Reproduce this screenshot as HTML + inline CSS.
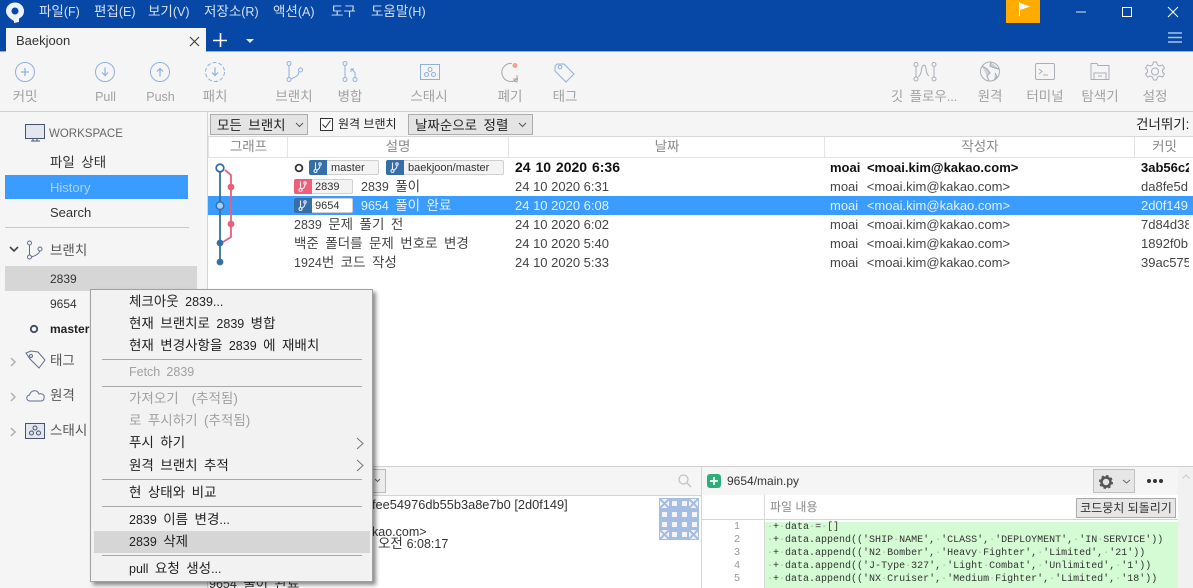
<!DOCTYPE html>
<html><head><meta charset="utf-8">
<style>
html,body{margin:0;padding:0;width:1193px;height:588px;overflow:hidden;background:#fff}
body{position:relative;font-family:"Liberation Sans","Noto Sans CJK KR",sans-serif;font-size:13px;color:#333}
i{font-style:normal;font-size:12.5px}
.a{position:absolute;white-space:nowrap}
.k{font-size:13.5px;word-spacing:2.7px}
.m{color:#d5e1f3;top:4px;font-size:13.5px;line-height:16px}
.t{color:#a2a2a2;font-size:13.5px;top:89px;line-height:16px;text-align:center;transform:translateX(-50%);word-spacing:2.7px}
svg{position:absolute;overflow:visible}
.r{position:absolute;left:208px;right:0;height:19px;line-height:19px;font-size:13px}
.de{position:absolute;font-size:13.5px;word-spacing:2.7px}
.d{position:absolute;left:307px;font-size:13px}
.w{position:absolute;left:622px;font-size:13px;word-spacing:5px}
.h{position:absolute;left:933px;width:48px;overflow:hidden;font-size:13px}
.c{position:absolute;top:137px;height:20px;line-height:20px;color:#8a8a8a;font-size:13.5px;text-align:center;border-left:1px solid #e4e4e4}
.btn{position:absolute;top:114px;height:19px;background:#e4e4e4;border:1px solid #adadad;line-height:21px;font-size:13.5px;word-spacing:2.7px;color:#222;padding-left:6px;box-sizing:content-box}
.tag{position:absolute;height:13px;border:1px solid #d0d0d0;background:#f3f3f3;border-radius:2px;font-size:11px;line-height:15px;color:#333;box-sizing:content-box}
.tg{position:absolute;left:-1px;top:-1px;width:18px;height:15px;border-radius:2px 0 0 2px}
.mi{position:absolute;left:129px;font-size:13.5px;word-spacing:2.7px;line-height:16px;color:#222;white-space:nowrap}
.g{color:#a0a0a0}
.sep{position:absolute;left:102px;width:260px;height:1px;background:#a8a8a8}
.s{position:absolute;left:50px;font-size:13.5px;word-spacing:2.7px;line-height:16px;white-space:nowrap}
.ln{position:absolute;left:702px;width:38px;text-align:right;font:10.5px/13px "Liberation Sans",sans-serif;color:#999}
.code{position:absolute;left:767px;font:10px/13px "Liberation Mono",monospace;color:#333;white-space:pre}
.code b{font-weight:400;color:#9cc59c}
</style></head><body>
<!-- title -->
<div class="a" style="left:0;top:0;width:1193px;height:51px;background:#0747a6"></div>
<div class="a" style="left:0;top:51px;width:1193px;height:1px;background:#8fb0d9"></div>
<svg width="24" height="26" style="left:4px;top:1px" viewBox="0 0 24 26"><path d="M10 20C5 17 2 14 2 10a9 8.500 0 1 1 18 0c0 4-2 6-5 7.500V21l-5 1z" fill="#eef3fb"/><circle cx="11" cy="10" r="3.500" fill="#0747a6"/></svg>
<div class="a m" style="left:39px">파일<i>(F)</i></div>
<div class="a m" style="left:94px">편집<i>(E)</i></div>
<div class="a m" style="left:148px">보기<i>(V)</i></div>
<div class="a m" style="left:204px">저장소<i>(R)</i></div>
<div class="a m" style="left:273px">액션<i>(A)</i></div>
<div class="a m" style="left:331px">도구</div>
<div class="a m" style="left:371px">도움말<i>(H)</i></div>
<div class="a" style="left:1006px;top:0;width:34px;height:23px;background:#ffab00"></div>
<svg width="14" height="16" style="left:1018px;top:2px"><path d="M1.500 0v14" stroke="#fff" fill="none"/><path d="M2 1l10 3.500L2 8z" fill="#fff"/></svg>
<svg width="120" height="14" style="left:1070px;top:5px"><path d="M6 7h10" stroke="#dfe8f5" fill="none"/><rect x="52.500" y="2.500" width="9" height="9" stroke="#fff" fill="none"/><path d="M98 2l10 10M108 2L98 12" stroke="#fff" fill="none"/></svg>
<div class="a" style="left:6px;top:28px;width:200px;height:24px;background:#f5f5f5"></div>
<div class="a" style="left:16px;top:33px;font-size:13px;line-height:16px;color:#333">Baekjoon</div>
<svg width="11" height="11" style="left:189px;top:36px"><path d="M1 1l9 9M10 1L1 10" stroke="#444" stroke-width="1.200" fill="none"/></svg>
<svg width="15" height="15" style="left:213px;top:33px"><path d="M7.500 0v14M0 7.500h14" stroke="#fff" stroke-width="1.600" fill="none"/></svg>
<svg width="9" height="5" style="left:246px;top:39px"><path d="M0 0h8L4 4z" fill="#e6edf7"/></svg>
<svg width="15" height="12" style="left:1168px;top:32px"><path d="M0 1h14M0 5.500h14M0 10h14" stroke="#aac4e6" stroke-width="1.500" fill="none"/></svg>
<!-- toolbar -->
<div class="a" style="left:0;top:52px;width:1193px;height:59px;background:#f5f5f5"></div>
<div class="a" style="left:0;top:111px;width:1193px;height:1px;background:#cfcfcf"></div>
<svg width="1193" height="60" style="left:0;top:52px" fill="none" stroke="#8fb0e0" stroke-width="1">
<circle cx="25" cy="20" r="9.500"/><path d="M25 16v8M21 20h8" stroke-width="1.300"/>
<circle cx="105" cy="20" r="9.500"/><path d="M105 15.500v8M102 20.500l3 3 3-3" stroke-width="1.200"/>
<circle cx="160" cy="20" r="9.500"/><path d="M160 24.500v-8M157 19.500l3-3 3 3" stroke-width="1.200"/>
<circle cx="215" cy="20" r="9.500" stroke-dasharray="4 2"/><path d="M215 15.500v8M212 20.500l3 3 3-3" stroke-width="1.200"/>
<circle cx="289" cy="11.500" r="2"/><circle cx="289" cy="27.500" r="2"/><circle cx="300.500" cy="18" r="2"/><path d="M289 13.500v12M299 19.500c0 4-4 6-8 7.500"/>
<circle cx="345" cy="11.500" r="2"/><circle cx="345" cy="27.500" r="2"/><circle cx="355" cy="27.500" r="2"/><path d="M345 13.500v12M355 25.500v-5l-3-3M351 20v-3h3"/>
<rect x="420.500" y="12.500" width="19" height="15"/><circle cx="430" cy="17.500" r="2"/><circle cx="426.500" cy="22.500" r="2"/><circle cx="433.500" cy="22.500" r="2"/>
<path d="M555 18l2-2 7 0 10 10-8 8-11-11z" transform="translate(0,-4)"/><circle cx="560" cy="15" r="1.800"/>
</svg>
<svg width="24" height="24" style="left:498px;top:60px" fill="none"><path d="M14 3.500A9 9 0 1 0 19 19" stroke="#a8a8a8"/><path d="M15.500 21l4-2.500-.5 3.500z M19 15v4h-4" stroke="#a8a8a8"/><circle cx="17" cy="5.500" r="2.500" fill="#f4a08c"/></svg>
<svg width="300" height="30" style="left:910px;top:60px" fill="none" stroke="#a9aeb8">
<g transform="translate(2,0)"><circle cx="4" cy="4.500" r="2"/><circle cx="4" cy="19" r="2"/><circle cx="22" cy="4.500" r="2"/><circle cx="22" cy="19" r="2"/><path d="M4 6.500v10.500M22 6.500v10.500M6 17c5-3 2-11 6-12"/><path d="M12 5c3 0 1 9 5 11"/></g>
<circle cx="80" cy="11.500" r="9.500"/><path d="M72 6l5 3 3 4-3 3 2 5M81 2l-1 4 5 2 4 1M85 13l2 4-3 3" stroke-width="1.200" fill="#cfd2d8"/>
<rect x="125.500" y="3.500" width="19" height="16" rx="1.500"/><path d="M129 9l3 2.500-3 2.500M133 15h5"/>
<path d="M181 3.500h6l1 2h11v14h-18zM184 19v-6h12v6M188 16h4"/>
<path d="M245 2l3 0 1 3 2 1 3-1 2 3-2 2v2l2 2-2 3-3-1-2 1-1 3h-3l-1-3-2-1-3 1-2-3 2-2v-2l-2-2 2-3 3 1 2-1z" transform="translate(-1.500,0)"/><circle cx="245" cy="11.500" r="3.500"/>
</svg>
<div class="a t" style="left:25px">커밋</div>
<div class="a t" style="left:105.500px"><i>Pull</i></div>
<div class="a t" style="left:160.500px"><i>Push</i></div>
<div class="a t" style="left:215px">패치</div>
<div class="a t" style="left:294px">브랜치</div>
<div class="a t" style="left:350px">병합</div>
<div class="a t" style="left:429px">스태시</div>
<div class="a t" style="left:510px">폐기</div>
<div class="a t" style="left:565px">태그</div>
<div class="a t" style="left:924px">깃 플로우<i>...</i></div>
<div class="a t" style="left:990px">원격</div>
<div class="a t" style="left:1045px">터미널</div>
<div class="a t" style="left:1100px">탐색기</div>
<div class="a t" style="left:1155px">설정</div>
<!-- sidebar -->
<div class="a" style="left:0;top:112px;width:207px;height:476px;background:#f5f5f5"></div>
<div class="a" style="left:207px;top:112px;width:1px;height:476px;background:#d4d4d4"></div>
<svg width="22" height="20" style="left:25px;top:124px" fill="none"><rect x=".5" y=".5" width="19" height="14" fill="#e3e6ee" stroke="#44536e"/><path d="M6 17h9M8 15v2M12 15v2" stroke="#44536e"/></svg>
<div class="s" style="top:126px;left:49px;font-size:11.500px;color:#666">WORKSPACE</div>
<div class="s" style="top:155px;color:#333">파일 상태</div>
<div class="a" style="left:5px;top:175px;width:183px;height:24px;background:#3b9cff"></div>
<div class="s" style="top:180px;color:#a8d3ff;font-size:13px">History</div>
<div class="s" style="top:205px;color:#333;font-size:13px">Search</div>
<div class="a" style="left:5px;top:227px;width:184px;height:1px;background:#c8c8c8"></div>
<svg width="40" height="22" style="left:7px;top:240px" fill="none" stroke="#5c6e8e"><path d="M3 7l4 4 4-4" stroke="#444" stroke-width="1.600"/><circle cx="22.500" cy="3" r="2"/><circle cx="22.500" cy="17" r="2"/><circle cx="33" cy="9" r="2"/><path d="M22.500 5v10M32.500 11c0 3-5 5-8 6"/></svg>
<div class="s" style="top:243px;color:#555">브랜치</div>
<div class="a" style="left:5px;top:266px;width:192px;height:25px;background:#d6d6d6"></div>
<div class="s" style="top:271px;color:#333;font-size:12px">2839</div>
<div class="s" style="top:296px;color:#333;font-size:12px">9654</div>
<svg width="10" height="10" style="left:29px;top:324px" fill="none"><circle cx="5" cy="5" r="3.200" stroke="#3a4a60" stroke-width="1.800"/></svg>
<div class="s" style="top:321px;color:#222;font-weight:700;font-size:12px">master</div>
<svg width="12" height="150" style="left:10px;top:356px" fill="none" stroke="#b0b0b0" stroke-width="1.500"><path d="M1 2l4 4-4 4M1 37l4 4-4 4M1 72l4 4-4 4"/></svg>
<svg width="22" height="20" style="left:25px;top:350px" fill="none" stroke="#5c6e8e"><path d="M1 3l5-2 7 1 7 8-6 8-9-9z"/><circle cx="6" cy="6" r="1.500"/></svg>
<div class="s" style="top:353px;color:#555">태그</div>
<svg width="20" height="14" style="left:26px;top:389px" fill="none" stroke="#5c6e8e"><path d="M4 12a3 3 0 0 1-.500-6C5 1 11 0 13 5c3-1 6 1 5 4 0 2-1 3-3 3z"/></svg>
<div class="s" style="top:388px;color:#555">원격</div>
<svg width="20" height="16" style="left:25px;top:423px" fill="none" stroke="#44536e"><rect x=".5" y=".5" width="19" height="15" fill="#e3e6ee"/><circle cx="10" cy="5" r="2"/><circle cx="6.500" cy="10" r="2"/><circle cx="13.500" cy="10" r="2"/></svg>
<div class="s" style="top:423px;color:#555">스태시</div>
<!-- filter -->
<div class="a" style="left:208px;top:112px;width:985px;height:25px;background:#f5f5f5;border-bottom:1px solid #d8d8d8;box-sizing:border-box"></div>
<div class="btn" style="left:210px;width:90px">모든 브랜치</div>
<svg width="10" height="6" style="left:295px;top:122px" fill="none"><path d="M1 1l3.500 3.500L8 1" stroke="#555"/></svg>
<svg width="13" height="13" style="left:320px;top:118px" fill="none"><rect x=".5" y=".5" width="12" height="12" stroke="#333" fill="#fff"/><path d="M2.500 6.500l3 3 5-7" stroke="#333"/></svg>
<div class="a" style="left:338px;top:116px;font-size:12px;line-height:16px;color:#222">원격 브랜치</div>
<div class="btn" style="left:408px;width:117px">날짜순으로 정렬</div>
<svg width="10" height="6" style="left:518px;top:122px" fill="none"><path d="M1 1l3.500 3.500L8 1" stroke="#555"/></svg>
<div class="a k" style="left:1136px;top:117px;line-height:16px;color:#222">건너뛰기:</div>
<!-- col headers -->
<div class="c" style="left:208px;width:79px">그래프</div>
<div class="c" style="left:287px;width:220px">설명</div>
<div class="c" style="left:508px;width:316px">날짜</div>
<div class="c" style="left:824px;width:310px">작성자</div>
<div class="c" style="left:1134px;width:59px">커밋</div>
<div class="a" style="left:208px;top:157px;width:985px;height:1px;background:#e2e2e2"></div>
<!-- rows -->
<div class="a" style="left:208px;top:196px;width:985px;height:19px;background:#3b9cff"></div>
<div class="r" style="top:158px;color:#111;font-weight:700"><span class="d" style="font-size:14px;word-spacing:1px">24 10 2020 6:36</span><span class="w" style="word-spacing:3px">moai &lt;moai.kim@kakao.com&gt;</span><span class="h">3ab56c2</span></div>
<div class="r" style="top:177px;color:#444"><span class="de" style="left:153px"><i>2839</i> 풀이</span><span class="d">24 10 2020 6:31</span><span class="w">moai &lt;moai.kim@kakao.com&gt;</span><span class="h">da8fe5d</span></div>
<div class="r" style="top:196px;color:#e3f1ff"><span class="de" style="left:153px"><i>9654</i> 풀이 완료</span><span class="d">24 10 2020 6:08</span><span class="w">moai &lt;moai.kim@kakao.com&gt;</span><span class="h">2d0f149</span></div>
<div class="r" style="top:215px;color:#444"><span class="de" style="left:86px"><i>2839</i> 문제 풀기 전</span><span class="d">24 10 2020 6:02</span><span class="w">moai &lt;moai.kim@kakao.com&gt;</span><span class="h">7d84d38</span></div>
<div class="r" style="top:234px;color:#444"><span class="de" style="left:86px">백준 폴더를 문제 번호로 변경</span><span class="d">24 10 2020 5:40</span><span class="w">moai &lt;moai.kim@kakao.com&gt;</span><span class="h">1892f0b</span></div>
<div class="r" style="top:253px;color:#444"><span class="de" style="left:86px"><i>1924</i>번 코드 작성</span><span class="d">24 10 2020 5:33</span><span class="w">moai &lt;moai.kim@kakao.com&gt;</span><span class="h">39ac575</span></div>
<!-- tags -->
<svg width="10" height="10" style="left:294px;top:163px" fill="none"><circle cx="5" cy="5" r="3.400" stroke="#333" stroke-width="1.800"/></svg>
<div class="tag" style="left:309px;top:160px;width:68px"><div class="tg" style="background:#366fa8"></div><span style="margin-left:21px">master</span></div>
<div class="tag" style="left:386px;top:160px;width:116px"><div class="tg" style="background:#366fa8"></div><span style="margin-left:21px">baekjoon/master</span></div>
<div class="tag" style="left:294px;top:179px;width:57px"><div class="tg" style="background:#ef5f78"></div><span style="margin-left:20px">2839</span></div>
<div class="tag" style="left:294px;top:198px;width:57px;background:#fff"><div class="tg" style="background:#366fa8"></div><span style="margin-left:20px">9654</span></div>
<svg width="300" height="60" style="left:0;top:0" fill="none" stroke="#e6eef8" stroke-width="1.100">
<g transform="translate(309,160)"><path d="M6.500 2.500v7"/><circle cx="6.500" cy="11" r="1.500"/><circle cx="11" cy="4" r="1.200"/><path d="M11 5.500c0 3-2 4-3 4.500"/></g>
<g transform="translate(386,160)"><path d="M6.500 2.500v7"/><circle cx="6.500" cy="11" r="1.500"/><circle cx="11" cy="4" r="1.200"/><path d="M11 5.500c0 3-2 4-3 4.500"/></g>
<g transform="translate(294,179)"><path d="M6.500 2.500v7"/><circle cx="6.500" cy="11" r="1.500"/><circle cx="11" cy="4" r="1.200"/><path d="M11 5.500c0 3-2 4-3 4.500"/></g>
<g transform="translate(294,198)"><path d="M6.500 2.500v7"/><circle cx="6.500" cy="11" r="1.500"/><circle cx="11" cy="4" r="1.200"/><path d="M11 5.500c0 3-2 4-3 4.500"/></g>
</svg>
<!-- graph -->
<svg width="40" height="110" style="left:208px;top:160px" fill="none">
<path d="M12 12v90" stroke="#366fa8" stroke-width="1.800"/>
<path d="M17 10l6 5v62l-8 5" stroke="#e8607a" stroke-width="1.800"/>
<circle cx="23" cy="27" r="3.400" fill="#e8607a"/><circle cx="23" cy="64" r="3.400" fill="#e8607a"/>
<circle cx="12" cy="8" r="3.800" fill="#fff" stroke="#366fa8" stroke-width="1.800"/>
<circle cx="12" cy="45.700" r="3.800" fill="#a9d3ff" stroke="#366fa8" stroke-width="1.500"/>
<circle cx="12" cy="83" r="3.400" fill="#366fa8"/><circle cx="12" cy="102" r="3.400" fill="#366fa8"/>
</svg>
<!-- bottom -->
<div class="a" style="left:208px;top:466px;width:985px;height:1px;background:#d0d0d0"></div>
<div class="a" style="left:208px;top:467px;width:985px;height:28px;background:#f5f5f5;border-bottom:1px solid #d4d4d4"></div>
<div class="a" style="left:350px;top:469px;width:34px;height:22px;background:#ececec;border:1px solid #bbb"></div>
<svg width="8" height="5" style="left:374px;top:478px" fill="none"><path d="M1 1l2.500 2.500L6 1" stroke="#666"/></svg>
<svg width="14" height="14" style="left:678px;top:474px" fill="none" stroke="#c2c2c2" stroke-width="1.300"><circle cx="5.500" cy="5.500" r="4.500"/><path d="M9 9l4 4"/></svg>
<div class="a" style="left:701px;top:467px;width:1px;height:121px;background:#d4d4d4"></div>
<svg width="14" height="14" style="left:707px;top:474px"><rect width="14" height="14" rx="3" fill="#2eaf7a"/><path d="M7 3v8M3 7h8" stroke="#fff" stroke-width="1.800"/></svg>
<div class="a" style="left:727px;top:473px;font-size:12px;line-height:16px;color:#333">9654/main.py</div>
<div class="a" style="left:1093px;top:469px;width:40px;height:22px;background:#e6e6e6;border:1px solid #c0c0c0"></div>
<svg width="16" height="16" style="left:1098px;top:474px"><circle cx="8" cy="8" r="4.500" fill="none" stroke="#555" stroke-width="2.500"/><circle cx="8" cy="8" r="6" fill="none" stroke="#555" stroke-width="2" stroke-dasharray="2.400 2.300"/></svg>
<svg width="10" height="6" style="left:1122px;top:479px" fill="none"><path d="M1 1l3.500 3 3.500-3" stroke="#666"/></svg>
<svg width="18" height="6" style="left:1146px;top:478px"><circle cx="3" cy="3" r="2" fill="#333"/><circle cx="9" cy="3" r="2" fill="#333"/><circle cx="15" cy="3" r="2" fill="#333"/></svg>
<div class="a" style="left:1178px;top:467px;width:15px;height:121px;background:#f1f1f1"></div>
<svg width="9" height="5" style="left:1182px;top:474px" fill="none"><path d="M.5 4.500L4 1l3.500 3.500" stroke="#ccc"/></svg>
<!-- commit details -->
<div class="a" style="left:372px;top:497px;font-size:12.800px;line-height:16px;color:#333">fee54976db55b3a8e7b0 [2d0f149]</div>
<div class="a" style="left:372px;top:524px;font-size:12.500px;line-height:16px;color:#333">kao.com&gt;</div>
<div class="a k" style="left:378px;top:536px;line-height:16px;color:#333;word-spacing:0">오전 <i>6:08:17</i></div>
<div class="a k" style="left:209px;top:576px;line-height:16px;color:#333"><i>9654</i> 풀이 완료</div>
<svg width="40" height="42" style="left:659px;top:498px"><rect width="40" height="42" fill="#a5bde3"/><g fill="#f2f4fa"><rect x="13" y="3" width="5" height="5"/><rect x="23" y="3" width="5" height="5"/><rect x="3" y="14" width="5" height="5"/><rect x="13" y="14" width="5" height="5"/><rect x="23" y="14" width="5" height="5"/><rect x="33" y="14" width="5" height="5"/><rect x="3" y="24" width="5" height="5"/><rect x="13" y="24" width="5" height="5"/><rect x="23" y="24" width="5" height="5"/><rect x="33" y="24" width="5" height="5"/><rect x="13" y="34" width="5" height="5"/><rect x="23" y="34" width="5" height="5"/><rect x="1" y="1" width="9" height="9"/><rect x="30" y="1" width="9" height="9"/><rect x="1" y="32" width="9" height="9"/><rect x="30" y="32" width="9" height="9"/></g><path d="M1 1l9 9M10 1l-9 9M30 1l9 9M39 1l-9 9M1 32l9 9M10 32l-9 9M30 32l9 9M39 32l-9 9" stroke="#a5bde3" stroke-width="2" fill="none"/></svg>
<!-- file pane -->
<div class="a" style="left:702px;top:495px;width:476px;height:25px;background:#fff;border-bottom:1px solid #d4d4d4;box-sizing:border-box"></div>
<div class="a" style="left:764px;top:495px;width:1px;height:93px;background:#d8d8d8"></div>
<div class="a" style="left:770px;top:499px;font-size:12px;line-height:16px;color:#888">파일 내용</div>
<div class="a" style="left:1076px;top:498px;width:98px;height:18px;background:#e6e6e6;border:1px solid #aaa;text-align:center;font-size:12px;line-height:18px;color:#333">코드뭉치 되돌리기</div>
<div class="a" style="left:765px;top:522px;width:413px;height:66px;background:#d4fbd4"></div>
<div class="ln" style="top:520px">1</div><div class="ln" style="top:533px">2</div><div class="ln" style="top:546px">3</div><div class="ln" style="top:559px">4</div><div class="ln" style="top:572px">5</div>
<div class="code" style="top:521px"><b>·</b>+<b>·</b>data<b>·</b>=<b>·</b>[]</div>
<div class="code" style="top:534px"><b>·</b>+<b>·</b>data.append(('SHIP<b>·</b>NAME',<b>·</b>'CLASS',<b>·</b>'DEPLOYMENT',<b>·</b>'IN<b>·</b>SERVICE'))</div>
<div class="code" style="top:547px"><b>·</b>+<b>·</b>data.append(('N2<b>·</b>Bomber',<b>·</b>'Heavy<b>·</b>Fighter',<b>·</b>'Limited',<b>·</b>'21'))</div>
<div class="code" style="top:560px"><b>·</b>+<b>·</b>data.append(('J-Type<b>·</b>327',<b>·</b>'Light<b>·</b>Combat',<b>·</b>'Unlimited',<b>·</b>'1'))</div>
<div class="code" style="top:573px"><b>·</b>+<b>·</b>data.append(('NX<b>·</b>Cruiser',<b>·</b>'Medium<b>·</b>Fighter',<b>·</b>'Limited',<b>·</b>'18'))</div>
<!-- context menu -->
<div class="a" style="left:90px;top:289px;width:283px;height:293px;background:#f2f2f2;border:1px solid #a0a0a0;box-sizing:border-box;box-shadow:3px 3px 4px rgba(0,0,0,.45)"></div>
<div class="a" style="left:94px;top:531px;width:276px;height:22px;background:#d6d6d6"></div>
<div class="mi" style="top:294px">체크아웃 <i>2839...</i></div>
<div class="mi" style="top:316px">현재 브랜치로 <i>2839</i> 병합</div>
<div class="mi" style="top:338px">현재 변경사항을 <i>2839</i> 에 재배치</div>
<div class="sep" style="top:359px"></div>
<div class="mi g" style="top:364px"><i>Fetch 2839</i></div>
<div class="sep" style="top:386px"></div>
<div class="mi g" style="top:391px">가져오기 &nbsp;(추적됨)</div>
<div class="mi g" style="top:413px">로 푸시하기 (추적됨)</div>
<div class="mi" style="top:435px">푸시 하기</div>
<div class="mi" style="top:458px">원격 브랜치 추적</div>
<svg width="8" height="60" style="left:356px;top:437px" fill="none" stroke="#777"><path d="M1 1l6 5.500L1 12M1 23l6 5.500L1 34"/></svg>
<div class="sep" style="top:479px"></div>
<div class="mi" style="top:485px">현 상태와 비교</div>
<div class="sep" style="top:506px"></div>
<div class="mi" style="top:512px"><i>2839</i> 이름 변경<i>...</i></div>
<div class="mi" style="top:534px"><i>2839</i> 삭제</div>
<div class="sep" style="top:555px"></div>
<div class="mi" style="top:561px"><i>pull</i> 요청 생성<i>...</i></div>
</body></html>
